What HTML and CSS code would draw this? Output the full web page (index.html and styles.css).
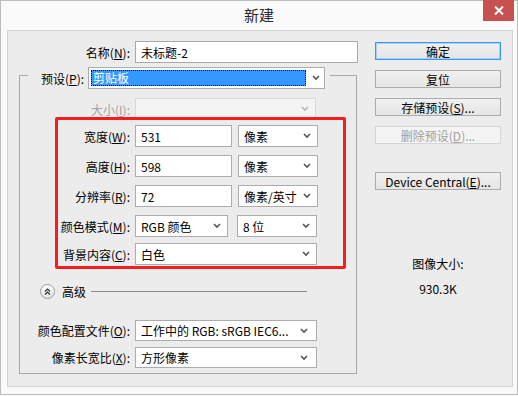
FILE: index.html
```html
<!DOCTYPE html>
<html lang="zh-CN">

<head>
    <meta charset="UTF-8">
    <title>新建</title>
    <link rel="stylesheet" href="styles.css">
</head>

<body>
    <div class="window">
        <div class="titlebar">
            <span class="title">新建</span>
            <span class="close">
                <svg width="10" height="9" viewBox="0 0 10 9"><path d="M1 0.5l8 8M9 0.5l-8 8" stroke="#fff" stroke-width="2" fill="none"/></svg>
            </span>
        </div>

        <div class="panel">
            <div class="main">
                <div class="row name-row">
                    <span class="lbl">名称(<u>N</u>):</span>
                    <div class="field name-field">未标题-2</div>
                </div>

                <div class="group">
                    <div class="legend">
                        <span class="legend-lbl">预设(<u>P</u>):</span>
                        <div class="field combo preset">
                            <span class="picked">剪贴板</span>
                            <svg class="chev" width="8" height="6" viewBox="0 0 8 6"><path d="M1 1l3 3 3-3" fill="none" stroke="currentColor" stroke-width="1.6"/></svg>
                        </div>
                    </div>

                    <div class="row group-row size-row">
                        <span class="lbl dim">大小(<u>I</u>):</span>
                        <div class="field combo disabled w181">
                            <span></span>
                            <svg class="chev" width="8" height="6" viewBox="0 0 8 6"><path d="M1 1l3 3 3-3" fill="none" stroke="currentColor" stroke-width="1.6"/></svg>
                        </div>
                    </div>

                    <div class="marked">
                        <div class="row mrow">
                            <span class="lbl">宽度(<u>W</u>):</span>
                            <div class="field num">531</div>
                            <div class="field combo unit">
                                <span>像素</span>
                                <svg class="chev" width="8" height="6" viewBox="0 0 8 6"><path d="M1 1l3 3 3-3" fill="none" stroke="currentColor" stroke-width="1.6"/></svg>
                            </div>
                        </div>
                        <div class="row mrow">
                            <span class="lbl">高度(<u>H</u>):</span>
                            <div class="field num">598</div>
                            <div class="field combo unit">
                                <span>像素</span>
                                <svg class="chev" width="8" height="6" viewBox="0 0 8 6"><path d="M1 1l3 3 3-3" fill="none" stroke="currentColor" stroke-width="1.6"/></svg>
                            </div>
                        </div>
                        <div class="row mrow">
                            <span class="lbl">分辨率(<u>R</u>):</span>
                            <div class="field num">72</div>
                            <div class="field combo unit">
                                <span>像素/英寸</span>
                                <svg class="chev" width="8" height="6" viewBox="0 0 8 6"><path d="M1 1l3 3 3-3" fill="none" stroke="currentColor" stroke-width="1.6"/></svg>
                            </div>
                        </div>
                        <div class="row mrow">
                            <span class="lbl">颜色模式(<u>M</u>):</span>
                            <div class="field combo mode">
                                <span>RGB 颜色</span>
                                <svg class="chev" width="8" height="6" viewBox="0 0 8 6"><path d="M1 1l3 3 3-3" fill="none" stroke="currentColor" stroke-width="1.6"/></svg>
                            </div>
                            <div class="field combo unit depth">
                                <span>8 位</span>
                                <svg class="chev" width="8" height="6" viewBox="0 0 8 6"><path d="M1 1l3 3 3-3" fill="none" stroke="currentColor" stroke-width="1.6"/></svg>
                            </div>
                        </div>
                        <div class="row mrow last">
                            <span class="lbl">背景内容(<u>C</u>):</span>
                            <div class="field combo w182">
                                <span>白色</span>
                                <svg class="chev" width="8" height="6" viewBox="0 0 8 6"><path d="M1 1l3 3 3-3" fill="none" stroke="currentColor" stroke-width="1.6"/></svg>
                            </div>
                        </div>
                    </div>

                    <div class="advanced">
                        <span class="adv-icon">
                            <svg width="7" height="7" viewBox="0 0 7 7"><path d="M1 3.5l2.5-2.5 2.5 2.5M1 6.5l2.5-2.5 2.5 2.5" fill="none" stroke="#333" stroke-width="1.2"/></svg>
                        </span>
                        <span class="adv-text">高级</span>
                        <span class="adv-line"></span>
                    </div>

                    <div class="row group-row profile-row">
                        <span class="lbl">颜色配置文件(<u>O</u>):</span>
                        <div class="field combo w182 short">
                            <span>工作中的 RGB: sRGB IEC6...</span>
                            <svg class="chev" width="8" height="6" viewBox="0 0 8 6"><path d="M1 1l3 3 3-3" fill="none" stroke="currentColor" stroke-width="1.6"/></svg>
                        </div>
                    </div>
                    <div class="row group-row aspect-row">
                        <span class="lbl">像素长宽比(<u>X</u>):</span>
                        <div class="field combo w182 short">
                            <span>方形像素</span>
                            <svg class="chev" width="8" height="6" viewBox="0 0 8 6"><path d="M1 1l3 3 3-3" fill="none" stroke="currentColor" stroke-width="1.6"/></svg>
                        </div>
                    </div>
                </div>
            </div>

            <div class="side">
                <div class="btn default">确定</div>
                <div class="btn">复位</div>
                <div class="btn">存储预设(<u>S</u>)...</div>
                <div class="btn off">删除预设(<u>D</u>)...</div>
                <div class="btn device">Device Central(<u>E</u>)...</div>

                <div class="info">
                    <div>图像大小:</div>
                    <div class="info-val">930.3K</div>
                </div>
            </div>
        </div>
    </div>
</body>

</html>
```

FILE: styles.css
```css
* {
    box-sizing: border-box;
}

body {
    margin: 0;
    background-color: #fafafa;
    font-family: "Noto Sans CJK SC", "Noto Sans", sans-serif;
    font-size: 12px;
    color: #000;
}

u {
    text-underline-offset: 1px;
}

.window {
    width: 518px;
    height: 395px;
    border: 1px solid #bcbcbc;
    background-color: #fafafa;
}

.titlebar {
    height: 29px;
    display: grid;
    grid-template-columns: 1fr auto 1fr;
}

.title {
    grid-column: 2;
    align-self: center;
    font-size: 15px;
    color: #2b2b2b;
    margin-top: -2px;
}

.close {
    grid-column: 3;
    justify-self: end;
    margin-right: 3px;
    margin-top: -1px;
    width: 31px;
    height: 21px;
    background-color: #c75050;
    display: flex;
    align-items: center;
    justify-content: center;
}

.panel {
    margin: 0 4px 0 6px;
    height: 357px;
    border: 1px solid #d2d2d2;
    background-color: #ececec;
    display: flex;
}

.main {
    width: 351px;
    padding-top: 10px;
}

.row {
    display: flex;
    align-items: center;
    height: 22px;
}

.lbl {
    flex: none;
    text-align: right;
    margin-right: 5px;
    white-space: nowrap;
}

.dim {
    color: #a3a3a3;
}

.name-row .lbl {
    width: 122px;
}

.field {
    height: 100%;
    background-color: #fff;
    border: 1px solid #acacac;
    display: flex;
    align-items: center;
    padding-left: 5px;
    white-space: nowrap;
    overflow: hidden;
}

.name-field {
    width: 223px;
    border-color: #a9a9a9;
}

.combo {
    justify-content: space-between;
    color: #000;
}

.chev {
    flex: none;
    color: #555;
    margin-right: 6px;
}

.group {
    margin: 12px 0 0 11px;
    width: 338px;
    border: 1px solid #a9a9a9;
    padding-bottom: 5px;
}

.legend {
    display: flex;
    align-items: center;
    width: fit-content;
    height: 22px;
    margin: -9px 0 0 8px;
    padding: 0 5px 0 13px;
    background-color: #ececec;
}

.legend-lbl {
    margin-right: 4px;
}

.preset {
    width: 237px;
    padding-left: 2px;
}

.picked {
    width: 215px;
    height: 16px;
    line-height: 15px;
    padding-left: 2px;
    background-color: #3399ff;
    color: #fff;
    outline: 1px dotted #000;
    outline-offset: -1px;
}

.preset .chev {
    margin-right: 4px;
}

.group-row .lbl {
    width: 110px;
}

.size-row {
    margin-top: 9px;
}

.disabled {
    background-color: #f3f3f3;
    border-color: #d9d9d9;
}

.disabled .chev {
    color: #b8b8b8;
}

.w181 {
    width: 181px;
}

.w182 {
    width: 182px;
}

.marked {
    position: relative;
    margin: -3px 0 0 35px;
    width: 291px;
    border: 3px solid #f81c1c;
    border-radius: 2px;
    padding: 5px 0 1px;
}

.mrow {
    margin-bottom: 8px;
}

.mrow:nth-child(4) {
    margin-bottom: 6px;
}

.mrow.last {
    margin-bottom: 0;
}

.mrow .lbl {
    width: 72px;
}

.num {
    width: 97px;
    margin-right: 6px;
}

.unit {
    width: 80px;
}

.mode {
    width: 93px;
    margin-right: 9px;
}

.advanced {
    display: flex;
    align-items: center;
    height: 15px;
    margin: 15px 0 0 20px;
}

.adv-icon {
    width: 15px;
    height: 15px;
    border-radius: 50%;
    border: 1px solid #9c9c9c;
    background: linear-gradient(#ffffff, #e2e2e2);
    display: flex;
    align-items: center;
    justify-content: center;
}

.adv-text {
    margin-left: 7px;
}

.adv-line {
    width: 216px;
    height: 1px;
    margin-left: 5px;
    background-color: #8c8c8c;
}

.profile-row {
    margin-top: 21px;
    height: 21px;
}

.aspect-row {
    margin-top: 6px;
    height: 21px;
}

.short .chev {
    margin-right: 8px;
}

.side {
    width: 126px;
    margin-left: 16px;
    padding-top: 11px;
}

.btn {
    height: 18px;
    margin-bottom: 10px;
    border: 1px solid #acacac;
    background: linear-gradient(#f0f0f0, #e5e5e5);
    display: flex;
    align-items: center;
    justify-content: center;
    white-space: nowrap;
}

.btn.default {
    border-color: #3399ff;
    box-shadow: inset 0 0 0 1px rgba(51, 153, 255, 0.35);
}

.btn.off {
    color: #a0a0a0;
    border-color: #d5d5d5;
    background: #f4f4f4;
}

.btn.device {
    margin-top: 28px;
}

.info {
    margin-top: 66px;
    text-align: center;
    line-height: 16px;
}

.info-val {
    margin-top: 9px;
}
```
